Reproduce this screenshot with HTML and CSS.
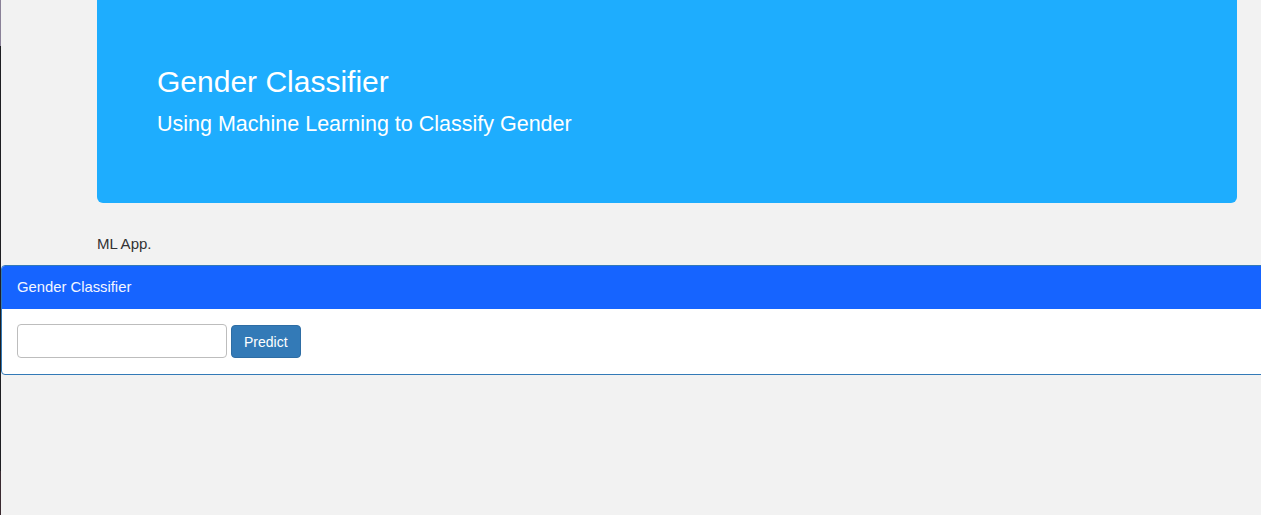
FILE: index.html
```html
<!DOCTYPE html>
<html lang="en">
<head>
<meta charset="utf-8">
<title>Gender Classifier</title>
<link rel="stylesheet" href="styles.css">
</head>
<body>
<div class="page">
  <div class="container">
    <div class="jumbotron">
      <h2 class="jumbo-title">Gender Classifier</h2>
      <p class="jumbo-lead">Using Machine Learning to Classify Gender</p>
    </div>
    <p class="note">ML App.</p>
  </div>
  <div class="panel">
    <div class="panel-heading">Gender Classifier</div>
    <div class="panel-body">
      <form class="predict-form">
        <input type="text" class="text-input" name="name">
        <button type="button" class="btn-predict">Predict</button>
      </form>
    </div>
  </div>
</div>
</body>
</html>
```

FILE: styles.css
```css
html, body {
  margin: 0;
  padding: 0;
  height: 100%;
}
body {
  background: #f2f2f2;
  font-family: "Liberation Sans", Arial, Helvetica, sans-serif;
  font-size: 14px;
  line-height: 1.42857;
  color: #333;
  overflow: hidden;
  border-left: 1px solid #222;
  border-image: linear-gradient(to bottom, #8a8198 0px, #8a8198 47px, #1e1e22 47px, #1e1e22 470px, #3a2a30 470px, #3a2a30 100%) 1;
  box-sizing: border-box;
}
.page {
  width: 1300px;
}
.container {
  padding-left: 96px;
  width: 1140px;
}
.jumbotron {
  background: #1eadfe;
  color: #fff;
  padding: 45px 60px 49px;
  border-radius: 0 0 6px 6px;
  margin-bottom: 31px;
}
.jumbo-title {
  font-size: 30px;
  font-weight: 400;
  line-height: 33px;
  margin: 20px 0 11px;
}
.jumbo-lead {
  font-size: 21.5px;
  line-height: 30px;
  margin: 0 0 15px;
  font-weight: 400;
}
.note {
  margin: 0 0 11px;
  font-size: 15px;
  line-height: 20px;
}
.panel {
  border: 1px solid #337ab7;
  border-radius: 4px;
  background: #fff;
  overflow: hidden;
}
.panel-heading {
  background: #1664ff;
  color: #f4f6ff;
  font-size: 14.8px;
  line-height: 22px;
  padding: 10px 15px 11px;
}
.panel-body {
  padding: 15px 15px 16px;
}
.predict-form {
  display: flex;
  align-items: flex-start;
  gap: 4px;
}
.text-input {
  width: 210px;
  height: 34px;
  box-sizing: border-box;
  border: 1px solid #bdbdbd;
  border-radius: 4px;
  padding: 6px 12px;
  font-family: inherit;
  font-size: 14px;
  background: #fff;
  margin: 0;
}
.btn-predict {
  margin-top: 1px;
  height: 33px;
  box-sizing: border-box;
  padding: 0 12px;
  background: #337ab7;
  border: 1px solid #2e6da4;
  border-radius: 4px;
  color: #fff;
  font-family: inherit;
  font-size: 14px;
  line-height: 20px;
}
```
